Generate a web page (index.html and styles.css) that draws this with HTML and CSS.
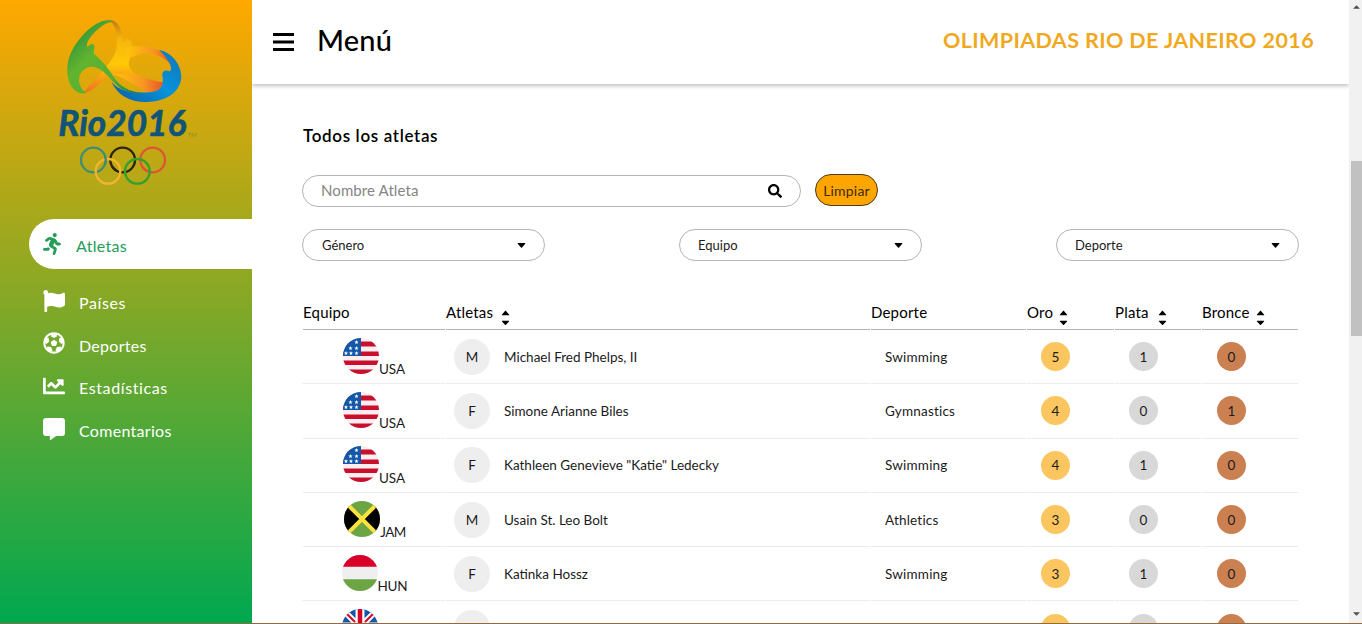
FILE: index.html
```html
<!DOCTYPE html>
<html lang="es">
<head>
<meta charset="utf-8">
<title>Olimpiadas Rio de Janeiro 2016</title>
<link rel="stylesheet" href="styles.css">
</head>
<body>
<svg class="defs" width="0" height="0">
  <defs>
    <clipPath id="round"><circle cx="18" cy="18" r="18"/></clipPath>
    <symbol id="usa" viewBox="0 0 36 36"><g clip-path="url(#round)"><path fill="#fbeef0" d="M0 0h36v36H0z"/><path fill="#c8102e" d="M0 3.500h36v5H0zM0 13.500h36v4.500H0zM0 22.500h36v4.500H0zM0 31.500h36V36H0z"/><path fill="#1257a8" d="M0 0h18v18H0z"/><path fill="#fff" d="M13.500 2l.6 1.400 1.500.1-1.200 1 .4 1.500-1.300-.8-1.300.8.4-1.500-1.200-1 1.500-.1zM7.500 8l.6 1.400 1.500.1-1.200 1 .4 1.500-1.300-.8-1.300.8.4-1.500-1.200-1 1.500-.1zM13.500 8l.6 1.400 1.500.1-1.200 1 .4 1.500-1.300-.8-1.300.8.4-1.500-1.200-1 1.500-.1zM3 13l.6 1.400 1.500.1-1.200 1 .4 1.500-1.300-.8-1.300.8.4-1.500-1.200-1 1.500-.1zM8 13l.6 1.400 1.500.1-1.200 1 .4 1.500-1.300-.8-1.300.8.4-1.500-1.200-1 1.500-.1zM13.500 13l.6 1.400 1.500.1-1.200 1 .4 1.500-1.300-.8-1.300.8.4-1.500-1.200-1 1.500-.1z"/></g></symbol>
    <symbol id="jam" viewBox="0 0 36 36"><g clip-path="url(#round)"><path fill="#6da544" d="M0 0h36v36H0z"/><path d="M0 0l18 18L0 36zM36 0L18 18l18 18z"/><path stroke="#ffe23d" stroke-width="4" d="M0 0l36 36M36 0L0 36"/></g></symbol>
    <symbol id="hun" viewBox="0 0 36 36"><g clip-path="url(#round)"><path fill="#efefef" d="M0 0h36v36H0z"/><path fill="#d80027" d="M0 0h36v11.700H0z"/><path fill="#6da544" d="M0 24.300h36V36H0z"/></g></symbol>
    <symbol id="gbr" viewBox="0 0 36 36"><g clip-path="url(#round)"><path fill="#1257a8" d="M0 0h36v36H0z"/><path stroke="#fff" stroke-width="6" d="M2 2l32 32M34 2L2 34"/><path stroke="#d80027" stroke-width="2" d="M2 2l32 32M34 2L2 34"/><path stroke="#fff" stroke-width="9" d="M18 0v36M0 18h36"/><path stroke="#d80027" stroke-width="4.500" d="M18 0v36M0 18h36"/></g></symbol>
    <symbol id="sort" viewBox="0 0 8 16"><path d="M.8 5.300Q-.2 5.300.5 4.400L3.500.9Q4 .3 4.500.9l3 3.500q.7.900-.3.900zM.8 10.700q-1 0-.3.900l3 3.200q.5.600 1 0l3-3.200q.7-.9-.3-.9z"/></symbol>
    <symbol id="caret" viewBox="0 0 8 5"><path d="M.6 0Q-.4 0 .4 1l3.100 3.400q.5.500 1 0L7.600 1Q8.400 0 7.400 0z"/></symbol>
  </defs>
</svg>
<div class="app">
  <aside class="sidebar">
    <svg class="logo" viewBox="0 0 510 570">
      <defs>
        <linearGradient id="lg" x1="0" y1="0" x2="1" y2="1"><stop offset="0" stop-color="#18843f"/><stop offset=".4" stop-color="#62b42f"/><stop offset=".7" stop-color="#51ad36"/><stop offset="1" stop-color="#047b4d"/></linearGradient>
        <linearGradient id="ly" x1="0" y1="0" x2="0" y2="1"><stop offset="0" stop-color="#c47818"/><stop offset=".25" stop-color="#f7b40c"/><stop offset=".6" stop-color="#ffc907"/><stop offset="1" stop-color="#ef6e22"/></linearGradient>
        <linearGradient id="lo" x1="0" y1="0" x2="1" y2="0"><stop offset="0" stop-color="#ffc408"/><stop offset=".6" stop-color="#f79722"/><stop offset="1" stop-color="#e8552c"/></linearGradient>
        <linearGradient id="lb" x1="0" y1="1" x2="1" y2="0"><stop offset="0" stop-color="#0a5aa0"/><stop offset=".5" stop-color="#0793dc"/><stop offset="1" stop-color="#1176b5"/></linearGradient>
      </defs>
      <path fill="url(#ly)" d="M205 46C232 44 243 65 248 102C252 112 256 112 257 105C257 99 275 102 275 113C271 124 282 126 305 125C285 140 262 158 267 183C274 200 290 210 310 217L330 228L300 250C285 245 270 230 256 220C236 206 220 205 196 222C174 240 154 261 130 265C145 240 176 218 190 196C210 171 227 153 230 122C233 82 227 57 205 46Z"/>
      <path fill="url(#lo)" d="M273 125C310 121 350 126 378 151L393 179C360 146 317 134 278 157C255 149 251 131 273 125Z"/>
      <path fill="url(#lo)" d="M218 207C244 207 277 211 306 216C335 225 353 230 370 232C365 250 352 262 330 263C295 254 264 222 218 207Z"/>
      <path fill="url(#lb)" d="M357 135C396 142 424 179 424 217C421 264 374 291 319 291C266 290 233 270 214 230C243 265 297 265 336 261C363 257 373 238 367 212C365 199 376 192 388 199C402 193 387 163 357 135Z"/>
      <path fill="url(#lg)" d="M222 50C198 36 158 57 128 91C97 126 80 161 82 201C84 247 109 269 139 265C116 249 111 220 124 202C137 184 160 180 180 193C207 210 218 235 244 251C267 263 290 264 309 263C267 261 239 245 219 213C202 184 182 164 165 149C157 143 165 132 163 122C160 113 148 116 143 127C136 118 148 98 167 79C184 62 203 50 222 50Z"/>
      <text class="logo-word" x="55" y="394" textLength="384" lengthAdjust="spacingAndGlyphs">Rio2016</text>
      <text class="logo-tm" x="443" y="396" textLength="28" lengthAdjust="spacingAndGlyphs">TM</text>
      <g fill="none" stroke-width="7">
        <circle cx="160" cy="465" r="37" stroke="#3e8d77"/>
        <circle cx="248" cy="465" r="37" stroke="#2b230c"/>
        <circle cx="338" cy="465" r="37" stroke="#dc5535"/>
        <circle cx="204" cy="499" r="37" stroke="#f3b431"/>
        <circle cx="292" cy="499" r="37" stroke="#35a02d"/>
        <path stroke="#3e8d77" d="M195 453a37 37 0 0 1 1 23"/>
        <path stroke="#2b230c" d="M231 498a37 37 0 0 1-15-14"/>
        <path stroke="#dc5535" d="M321 498a37 37 0 0 1-15-14"/>
      </g>
    </svg>
    <nav class="nav">
      <a class="nav-item active"><svg class="nav-icon runner" viewBox="0 0 416 512"><path d="M272 96c26.510 0 48-21.490 48-48S298.510 0 272 0s-48 21.490-48 48 21.490 48 48 48zM113.690 317.470l-14.800 34.520H32c-17.670 0-32 14.330-32 32s14.330 32 32 32h77.450c19.250 0 36.580-11.440 44.110-29.090l8.790-20.520-10.670-6.300c-17.320-10.230-30.060-25.370-37.990-42.610zM384 223.990h-44.030l-26.060-53.250c-12.500-25.550-35.450-44.230-61.780-50.940l-71.080-21.140c-28.300-6.800-57.770-.55-80.840 17.140l-39.670 30.410c-14.030 10.750-16.690 30.830-5.940 44.860s30.840 16.690 44.860 5.940l39.660-30.410c7.670-5.890 17.440-8 25.270-6.140l14.700 4.370-37.460 87.390c-12.620 29.480-1.310 64.010 26.300 80.310l84.980 50.170-27.470 87.730c-5.280 16.860 4.110 34.820 20.970 40.090 3.190 1 6.410 1.480 9.580 1.480 13.610 0 26.230-8.770 30.520-22.450l31.640-101.060c5.910-20.770-2.890-43.080-21.640-54.390l-61.240-36.140 31.310-78.280 20.270 41.430c8 16.340 24.920 26.890 43.110 26.890H384c17.670 0 32-14.330 32-32s-14.330-31.990-32-31.990z"/></svg><span>Atletas</span></a>
      <a class="nav-item"><svg class="nav-icon" viewBox="0 0 512 512"><path d="M349.565 98.783C295.978 98.783 251.721 64 184.348 64c-24.955 0-47.309 4.384-68.045 12.013a55.947 55.947 0 0 0 3.586-23.562C118.117 24.015 94.806 1.206 66.338.048 34.345-1.254 8 24.296 8 56c0 19.026 9.497 35.825 24 45.945V488c0 13.255 10.745 24 24 24h16c13.255 0 24-10.745 24-24v-94.400c28.311-12.064 63.582-22.122 114.435-22.122 53.588 0 97.844 34.783 165.217 34.783 48.169 0 86.667-16.294 122.505-40.858C506.840 359.452 512 349.571 512 339.045v-243.100c0-23.393-24.269-38.870-45.485-29.016-34.338 15.948-76.454 31.854-116.950 31.854z"/></svg><span class="wide">Países</span></a>
      <a class="nav-item"><svg class="nav-icon" viewBox="0 0 512 512"><path d="M504 256c0 136.967-111.033 248-248 248S8 392.967 8 256 119.033 8 256 8s248 111.033 248 248zm-48 0l-.003-.282-26.064 22.741-62.679-58.500 16.454-84.355 34.303 3.072c-24.889-34.216-60.004-60.089-100.709-73.141l13.651 31.939L256 139l-74.953-41.525 13.651-31.939c-40.631 13.028-75.780 38.870-100.709 73.141l34.565-3.073 16.192 84.355-62.678 58.500-26.064-22.741-.003.282c0 43.015 13.497 83.952 38.472 117.991l7.704-33.897 85.138 10.447 36.301 77.826-29.902 17.786c40.202 13.122 84.290 13.148 124.572 0l-29.902-17.786 36.301-77.826 85.138-10.447 7.704 33.897C442.503 339.952 456 299.015 456 256zm-248.102 69.571l-29.894-91.312L256 177.732l77.996 56.527-29.622 91.312h-96.476z"/></svg><span>Deportes</span></a>
      <a class="nav-item"><svg class="nav-icon" viewBox="0 0 512 512"><path d="M496 384H64V80c0-8.840-7.160-16-16-16H16C7.160 64 0 71.160 0 80v336c0 17.670 14.330 32 32 32h464c8.840 0 16-7.160 16-16v-32c0-8.840-7.160-16-16-16zM464 96H345.940c-21.380 0-32.090 25.850-16.970 40.970l32.400 32.400L288 242.750l-73.370-73.370c-12.500-12.500-32.760-12.500-45.250 0l-68.690 68.690c-6.250 6.250-6.250 16.380 0 22.630l22.620 22.620c6.250 6.250 16.380 6.250 22.630 0L192 237.250l73.370 73.370c12.500 12.500 32.760 12.500 45.250 0l96-96 32.400 32.400c15.120 15.120 40.970 4.410 40.970-16.970V112c.01-8.840-7.150-16-15.990-16z"/></svg><span class="wide">Estadísticas</span></a>
      <a class="nav-item"><svg class="nav-icon" viewBox="0 0 512 512"><path d="M448 0H64C28.700 0 0 28.700 0 64v288c0 35.300 28.700 64 64 64h96v84c0 9.800 11.200 15.500 19.100 9.700L304 416h144c35.300 0 64-28.700 64-64V64c0-35.300-28.700-64-64-64z"/></svg><span>Comentarios</span></a>
    </nav>
  </aside>
  <main class="main">
    <header class="topbar">
      <svg class="burger" viewBox="0 0 21 18"><path d="M0 0h21v3H0zM0 7.500h21v3H0zM0 15h21v3H0z"/></svg>
      <span class="menu-title">Menú</span>
      <span class="event">OLIMPIADAS RIO DE JANEIRO 2016</span>
    </header>
    <section class="content">
      <h2 class="heading">Todos los atletas</h2>
      <div class="search-row">
        <div class="search"><span class="placeholder">Nombre Atleta</span><svg class="search-icon" viewBox="0 0 512 512"><path d="M505 442.700L405.300 343c-4.500-4.500-10.600-7-17-7H372c27.600-35.300 44-79.700 44-128C416 93.100 322.900 0 208 0S0 93.100 0 208s93.100 208 208 208c48.300 0 92.700-16.400 128-44v16.300c0 6.400 2.500 12.500 7 17l99.700 99.700c9.400 9.400 24.600 9.400 33.900 0l28.300-28.300c9.400-9.400 9.400-24.600.1-34zM208 336c-70.700 0-128-57.200-128-128 0-70.700 57.200-128 128-128 70.700 0 128 57.200 128 128 0 70.700-57.200 128-128 128z"/></svg></div>
        <button class="clear">Limpiar</button>
      </div>
      <div class="filters">
        <div class="select"><span>Género</span><svg class="caret"><use href="#caret"/></svg></div>
        <div class="select"><span>Equipo</span><svg class="caret"><use href="#caret"/></svg></div>
        <div class="select"><span>Deporte</span><svg class="caret"><use href="#caret"/></svg></div>
      </div>
      <div class="table">
        <div class="row head"><div><span>Equipo</span></div><div><span>Atletas</span><svg class="sort"><use href="#sort"/></svg></div><div><span>Deporte</span></div><div><span>Oro</span><svg class="sort tight"><use href="#sort"/></svg></div><div><span>Plata</span><svg class="sort loose"><use href="#sort"/></svg></div><div><span>Bronce</span><svg class="sort tight"><use href="#sort"/></svg></div></div>
        <div class="row"><div class="team"><svg class="flag"><use href="#usa"/></svg><span>USA</span></div><div class="name"><i class="gender">M</i><span>Michael Fred Phelps, II</span></div><div class="sport">Swimming</div><div class="medal"><b class="gold">5</b></div><div class="medal"><b class="silver">1</b></div><div class="medal"><b class="bronze">0</b></div></div>
        <div class="row"><div class="team"><svg class="flag"><use href="#usa"/></svg><span>USA</span></div><div class="name"><i class="gender">F</i><span>Simone Arianne Biles</span></div><div class="sport">Gymnastics</div><div class="medal"><b class="gold">4</b></div><div class="medal"><b class="silver">0</b></div><div class="medal"><b class="bronze">1</b></div></div>
        <div class="row"><div class="team"><svg class="flag"><use href="#usa"/></svg><span>USA</span></div><div class="name"><i class="gender">F</i><span>Kathleen Genevieve "Katie" Ledecky</span></div><div class="sport">Swimming</div><div class="medal"><b class="gold">4</b></div><div class="medal"><b class="silver">1</b></div><div class="medal"><b class="bronze">0</b></div></div>
        <div class="row"><div class="team jam"><svg class="flag"><use href="#jam"/></svg><span>JAM</span></div><div class="name"><i class="gender">M</i><span>Usain St. Leo Bolt</span></div><div class="sport">Athletics</div><div class="medal"><b class="gold">3</b></div><div class="medal"><b class="silver">0</b></div><div class="medal"><b class="bronze">0</b></div></div>
        <div class="row"><div class="team hun"><svg class="flag"><use href="#hun"/></svg><span>HUN</span></div><div class="name"><i class="gender">F</i><span>Katinka Hossz</span></div><div class="sport">Swimming</div><div class="medal"><b class="gold">3</b></div><div class="medal"><b class="silver">1</b></div><div class="medal"><b class="bronze">0</b></div></div>
        <div class="row"><div class="team gbr"><svg class="flag"><use href="#gbr"/></svg></div><div class="name"><i class="gender"></i></div><div></div><div class="medal"><b class="gold"></b></div><div class="medal"><b class="silver"></b></div><div class="medal"><b class="bronze"></b></div></div>
      </div>
    </section>
  </main>
  <div class="scrollbar"><svg class="arrow" viewBox="0 0 8 4"><path d="M0 4l4-4 4 4z"/></svg><div class="thumb"></div><svg class="arrow" viewBox="0 0 8 4"><path d="M0 0l4 4 4-4z"/></svg></div>
</div>
<div class="edge"></div>
</body>
</html>
```
FILE: styles.css
```css
* { box-sizing: border-box; }
body { margin: 0; height: 624px; overflow: hidden; font-family: Lato, "Open Sans", sans-serif; color: #1b1b1b; }
svg { display: block; flex: none; }
.defs { position: absolute; }
.app { display: flex; height: 623px; overflow: hidden; background: #fff; }
.edge { height: 1px; background: #916b3d; }

.sidebar { width: 252px; flex: none; background: linear-gradient(#ffa800, #00a850); }
.logo { width: 170px; height: 190px; margin: 5px 0 0 40px; }
.logo-word { font: italic 700 108px Lato, sans-serif; fill: #105477; stroke: #105477; stroke-width: 2px; stroke-linejoin: round; }
.logo-tm { font: 18px Lato, sans-serif; fill: #8f8b2c; }
.nav { margin-top: 24px; display: flex; flex-direction: column; color: #fff; font-size: 16px; }
.nav-item { display: flex; align-items: center; height: 42.700px; padding-left: 43px; gap: 14px; letter-spacing: .3px; }
.nav-item span { padding-top: 3.500px; }
.nav-item .wide { letter-spacing: .6px; }
.nav-icon { width: 22px; height: 22px; fill: currentColor; }
.active { height: 50px; margin: 0 0 10.300px 29px; padding-left: 14px; background: #fff; color: #249d59; border-radius: 25px 0 0 25px; gap: 15px; }
.active span { padding-top: 2px; }
.runner { width: 18px; }

.main { width: 1097px; flex: none; }
.topbar { height: 84px; display: flex; align-items: center; padding: 0 36px 2px 21px; box-shadow: 0 2px 4px rgba(0,0,0,.25); clip-path: inset(0 0 -10px 0); }
.burger { width: 21px; height: 18px; margin-top: 2px; }
.menu-title { margin: -4px 0 0 23px; font-size: 29px; font-weight: 500; color: #000; letter-spacing: .2px; }
.event { margin: -2px -1px 0 auto; font-size: 21.500px; font-weight: 700; color: #f0a91f; letter-spacing: .4px; }
.content { padding: 42px 50px 0; }
.heading { margin: 0; height: 20px; line-height: 20px; font-size: 17px; font-weight: 600; color: #000; letter-spacing: .65px; padding-left: 1px; }
.search-row { display: flex; margin-top: 28px; gap: 14px; height: 34px; }
.search { width: 499px; height: 32px; margin-top: 1px; border: 1px solid #b5b5b5; border-radius: 16px; display: flex; align-items: center; justify-content: space-between; padding: 0 18px; }
.placeholder { color: #858585; font-size: 15px; letter-spacing: .1px; padding-bottom: 2px; }
.search-icon { width: 14px; height: 14px; }
.clear { width: 63px; height: 32px; border: 1px solid #4b3c16; border-radius: 16px; background: #ffa500; padding: 1px 0 0; font: 14px Lato, sans-serif; letter-spacing: .2px; color: #3c2b08; }
.filters { display: flex; justify-content: space-between; margin-top: 21px; }
.select { width: 243px; height: 32px; border: 1px solid #b5b5b5; border-radius: 16px; display: flex; align-items: center; justify-content: space-between; padding: 0 18px; font-size: 13px; }
.select:first-child { padding-left: 19px; }
.caret { width: 9px; height: 5px; }
.table { margin: 36px 0 0 1px; width: 995px; font-size: 13.500px; }
.row { display: grid; grid-template-columns: 142px 424px 155px 87px 86px 96px; column-gap: 1px; height: 54.300px; }
.row > div { display: flex; align-items: center; border-bottom: 1px solid #ebebeb; }
.head { height: 33px; font-size: 15px; color: #000; letter-spacing: .2px; }
.head span { padding-bottom: 2px; }
.head > div { border-color: #b3b3b3; }
.sort { width: 9px; height: 16px; margin: 9px 0 0 8px; }
.tight { margin-left: 6px; }
.loose { margin-left: 9px; }
.team { justify-content: center; }
.team span { padding-top: 25px; }
.row .jam { padding-left: 2px; letter-spacing: -.6px; }
.row .hun { padding-left: 1px; letter-spacing: -.2px; }
.row .gbr { justify-content: flex-start; padding-left: 39px; }
.flag { width: 36px; height: 36px; margin-top: -2px; }
.name { padding-left: 8px; gap: 14px; }
.gender { width: 36px; height: 36px; border-radius: 50%; background: #eee; display: flex; align-items: center; justify-content: center; font-style: normal; }
.sport { padding-left: 14px; letter-spacing: .2px; }
.medal { padding-left: 14px; }
.medal:last-child { padding-left: 15px; }
.medal b { width: 29px; height: 29px; border-radius: 50%; display: flex; align-items: center; justify-content: center; font-weight: 400; }
.gold { background: #fbc65f; }
.silver { background: #d8d8d8; }
.bronze { background: #cb8051; }

.scrollbar { width: 13px; flex: none; background: #f1f1f1; padding: 5px 0 7px 2px; display: flex; flex-direction: column; justify-content: space-between; }
.arrow { width: 7px; height: 4px; margin-left: 2px; fill: #505050; }
.thumb { height: 175px; background: #c1c1c1; margin-bottom: 124px; }
```
